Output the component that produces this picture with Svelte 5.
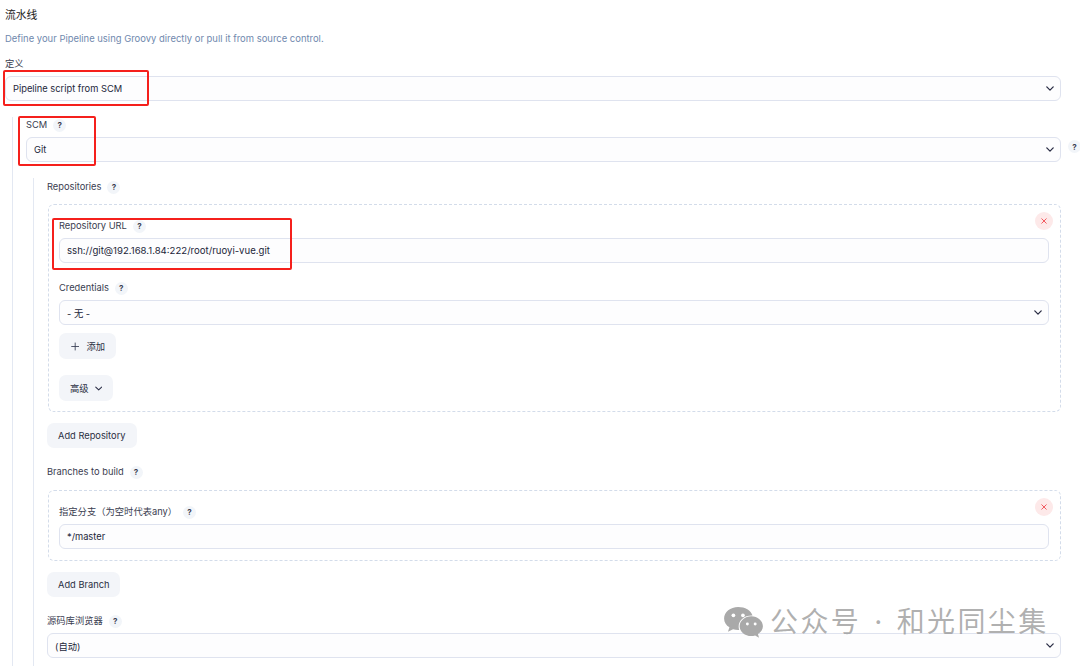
<script>
  const qm = '?';
</script>

{#snippet help()}
  <span class="help">{qm}</span>
{/snippet}

{#snippet chevron()}
  <svg class="chev" viewBox="0 0 10 6" width="8" height="5" aria-hidden="true"><path d="M1 1l4 4 4-4" fill="none" stroke="#2a2d45" stroke-width="1.6" stroke-linecap="round" stroke-linejoin="round"/></svg>
{/snippet}

{#snippet close()}
  <span class="close"><svg viewBox="0 0 8 8" width="6" height="6" aria-hidden="true"><path d="M1 1l6 6M7 1L1 7" stroke="#f04a50" stroke-width="1.2" stroke-linecap="round"/></svg></span>
{/snippet}

<div class="page">
  <h2 class="title">流水线</h2>
  <p class="desc">Define your Pipeline using Groovy directly or pull it from source control.</p>
  <div class="label first">定义</div>
  <div class="field sel">Pipeline script from SCM{@render chevron()}</div>

  <div class="l1">
    <div class="label scm">SCM {@render help()}</div>
    <div class="withhelp">
      <div class="field sel">Git{@render chevron()}</div>
      <span class="outer">{@render help()}</span>
    </div>

    <div class="l2">
      <div class="label sec">Repositories {@render help()}</div>
      <div class="card repo">
        {@render close()}
        <div class="label">Repository URL {@render help()}</div>
        <div class="field url">ssh://git@192.168.1.84:222/root/ruoyi-vue.git</div>
        <div class="label cred">Credentials {@render help()}</div>
        <div class="field sel">- 无 -{@render chevron()}</div>
        <button class="btn add"><svg viewBox="0 0 10 10" width="9" height="9" aria-hidden="true"><path d="M5 .8v8.400M.8 5h8.400" stroke="#333a50" stroke-width="1" stroke-linecap="round"/></svg>添加</button>
        <button class="btn adv">高级<svg viewBox="0 0 10 6" width="8" height="5" aria-hidden="true"><path d="M1 1l4 4 4-4" fill="none" stroke="#2a2d45" stroke-width="1.4" stroke-linecap="round" stroke-linejoin="round"/></svg></button>
      </div>
      <button class="btn addrepo">Add Repository</button>
      <div class="label sec branches">Branches to build {@render help()}</div>
      <div class="card branch">
        {@render close()}
        <div class="label">指定分支（为空时代表any） {@render help()}</div>
        <div class="field">*/master</div>
      </div>
      <button class="btn addbranch">Add Branch</button>
      <div class="label browser">源码库浏览器 {@render help()}</div>
      <div class="field sel">(自动){@render chevron()}</div>
    </div>
  </div>

  <div class="red r1"></div>
  <div class="red r2"></div>
  <div class="red r3"></div>

  <div class="mark">
    <svg viewBox="0 0 42 34" width="41" height="33" aria-hidden="true">
      <path d="M15.500 1C7.500 1 1 6.300 1 12.800c0 3.800 2.100 7 5.500 9.200L5 26.600l5.200-2.700c1.700.5 3.400.8 5.300.8h1.100c-.4-1.200-.6-2.400-.6-3.700 0-6.300 5.900-11.300 13.300-11.300h1C28.700 4.500 22.600 1 15.500 1z" fill="#a9a9a9"/>
      <circle cx="10.600" cy="9.600" r="1.900" fill="#fff"/><circle cx="20.400" cy="9.600" r="1.900" fill="#fff"/>
      <path d="M41 20.800c0-5.600-5.500-10.200-12-10.200s-12 4.600-12 10.200S22.500 31 29 31c1.400 0 2.700-.2 4-.6l4 2.300-1.100-3.800c3-1.900 5.100-4.800 5.100-8.100z" fill="#a9a9a9"/>
      <circle cx="25" cy="18.500" r="1.500" fill="#fff"/><circle cx="33" cy="18.500" r="1.500" fill="#fff"/>
    </svg>
    <span class="mtext">公众号<i>·</i>和光同尘集</span>
  </div>
</div>

<style>
  :global(body) { margin: 0; background: #fff; }
  .page {
    position: relative; width: 1080px; height: 666px; overflow: hidden; box-sizing: border-box;
    padding: 9px 19px 0 5px;
    font-family: Inter, "Noto Sans CJK SC", sans-serif; font-size: 9.3px; color: #2b2f42;
  }
  .title { margin: 0; font-size: 10.8px; font-weight: 400; line-height: 13px; color: #222; }
  .desc { margin: 10px 0 0; line-height: 13px; color: #7089ae; font-size: 9.45px; }
  .label { display: flex; align-items: center; gap: 6px; height: 12px; line-height: 12px; color: #3a3d50; white-space: nowrap; }
  .first { margin-top: 13px; margin-bottom: 1px; }
  .field {
    box-sizing: border-box; height: 25px; display: flex; align-items: center; justify-content: space-between;
    padding: 0 6px 0 7px; border: 1px solid #dfe3ef; border-radius: 6px; background: #fdfdfe; color: #23263a;
  }
  .url { font-size: 9.6px; }
  .label + .field { margin-top: 6px; }
  .withhelp { margin-top: 6px; position: relative; }
  .chev { flex: none; }
  .help {
    display: inline-flex; align-items: center; justify-content: center; width: 13px; height: 13px; border-radius: 50%;
    background: #f2f5f9; color: #3b3f52; font-size: 8px; font-weight: 700; flex: none;
  }
  .l1 { margin: 16px 0 0 7px; padding-left: 13px; border-left: 1px solid #e3e8f2; height: 560px; }
  .scm { padding-top: 2px; }
  .outer { position: absolute; left: 1042px; top: 3px; }
  .l2 { margin: 16px 0 0 7px; padding-left: 13px; border-left: 1px solid #e3e8f2; height: 500px; }
  .sec { padding-top: 3px; }
  .card {
    position: relative; box-sizing: border-box; margin-top: 11px; border: 1px dashed #d3dcea; border-radius: 6px;
    margin-left: 1px; padding: 0 11px 0 10px;
  }
  .repo { height: 208px; padding-top: 15px; }
  .branch { height: 71px; padding-top: 15px; margin-top: 12px; }
  .close {
    position: absolute; right: 7px; top: 7px; width: 18px; height: 18px; border-radius: 50%;
    background: #fde9e9; display: flex; align-items: center; justify-content: center;
  }
  .cred { margin-top: 19px; }
  .btn {
    display: flex; align-items: center; box-sizing: border-box; height: 25px; border: 0; border-radius: 7px; background: #f3f5f9;
    font: inherit; color: #2b2f42; padding: 0 11px; white-space: nowrap;
  }
  .add { margin-top: 8px; width: 57px; height: 26px; gap: 7px; padding-left: 12px; }
  .adv { margin-top: 16px; width: 54px; height: 26px; gap: 6px; }
  .addrepo { margin-top: 11px; width: 90px; }
  .branches { margin-top: 15px; }
  .addbranch { margin-top: 11px; width: 73px; }
  .browser { margin-top: 18px; }
  .red { position: absolute; border: 2px solid #f5201c; border-radius: 2px; box-sizing: border-box; }
  .r1 { left: 3px; top: 70px; width: 146px; height: 36px; }
  .r2 { left: 18px; top: 116px; width: 78px; height: 50px; }
  .r3 { left: 52px; top: 218px; width: 240px; height: 52px; }
  .mark {
    position: absolute; left: 723px; top: 604px; display: flex; align-items: center; gap: 6px;
    white-space: nowrap;
  }
  .mtext { color: rgba(150,150,150,.75); font-size: 28px; line-height: 36px; letter-spacing: 2.4px; }
  .mtext i { font-style: normal; padding: 0 12px 0 13px; }
</style>
